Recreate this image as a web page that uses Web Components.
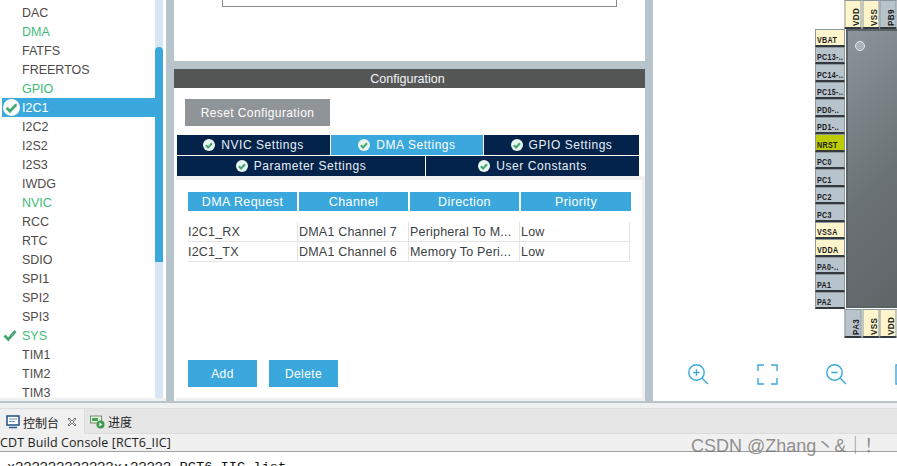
<!DOCTYPE html>
<html><head><meta charset="utf-8"><style>
html,body{margin:0;padding:0;width:897px;height:466px;overflow:hidden;background:#fff}
</style></head><body>
<mx-app></mx-app>
<script>
const F='"Liberation Sans",Arial,sans-serif';
function def(n,html){customElements.define(n,class extends HTMLElement{connectedCallback(){if(this.shadowRoot)return;const r=this.attachShadow({mode:'open'});r.innerHTML=html;}});}

def('mx-list',`<style>
:host{display:flex;width:166px;height:100%;flex:none;background:#fff;box-sizing:border-box;padding-left:2px;overflow:hidden;font:12.5px ${F};color:#4f4a48;border-bottom:3px solid #f0f0f0;border-left:0}
.items{width:153px;margin-top:3px;flex:none}
.i{height:19px;line-height:19px;display:flex;align-items:center;padding:1px 0 0 20px;box-sizing:border-box;position:relative;white-space:nowrap}
.g{color:#42bb77}
.s{background:#3aa8dc;color:#fff}
svg.ic{position:absolute;left:1px;top:1px}
svg.ck{position:absolute;left:1px;top:3px}
.bar{width:8px;flex:none;background:#d6e6f4;position:relative}
.th{position:absolute;left:0;right:0;top:47px;height:215px;background:#3aa8dc;border-radius:4px 4px 0 0}
</style><div class="items">
${[['DAC'],['DMA','g'],['FATFS'],['FREERTOS'],['GPIO','g'],['I2C1','s'],['I2C2'],['I2S2'],['I2S3'],['IWDG'],['NVIC','g'],['RCC'],['RTC'],['SDIO'],['SPI1'],['SPI2'],['SPI3'],['SYS','g k'],['TIM1'],['TIM2'],['TIM3']].map(([t,c=''])=>{
let ic='';
if(c==='s')ic=`<svg class="ic" width="17" height="17" viewBox="0 0 16 16"><circle cx="8" cy="8" r="8" fill="#fff"/><path d="M3.4 8.2l3.2 3.3 6-6.4" fill="none" stroke="#45a874" stroke-width="2.6"/></svg>`;
if(c==='g k')ic=`<svg class="ck" width="14" height="13" viewBox="0 0 14 13"><path d="M1.5 6.5l3.8 4 7.2-8.5" fill="none" stroke="#45a874" stroke-width="2.8"/></svg>`;
return `<div class="i ${c}">${ic}${t}</div>`}).join('')}
</div><div class="bar"><div class="th"></div></div>`);

def('mx-tab',`<style>
:host{display:flex;align-items:center;justify-content:center;gap:6px;box-sizing:border-box;background:#03234b;color:#e8f0f6;font:12px ${F};letter-spacing:.55px;white-space:nowrap}
:host([on]){background:#3aa8dc;color:#fff}
</style><svg width="12" height="12" viewBox="0 0 16 16"><circle cx="8" cy="8" r="8" fill="#e9f6ef"/><path d="M3.8 8.2l3 3 5.2-5.6" fill="none" stroke="#45a874" stroke-width="2.8"/></svg><slot></slot>`);

def('mx-btn',`<style>
:host{display:flex;align-items:center;justify-content:center;background:var(--b,#3aa8dc);color:#fff;font:12px ${F};letter-spacing:.4px;box-sizing:border-box;height:27px;white-space:nowrap}
</style><slot></slot>`);

def('mx-table',`<style>
:host{display:block;margin:12px 0 0 12px;width:443px;font:12.5px ${F};color:#3c3f44}
.h{display:grid;grid-template-columns:109px 109px 109px 110px;gap:2px;height:19px}
.h div{background:#3aa8dc;color:#fff;display:flex;align-items:center;justify-content:center;letter-spacing:.4px}
.r{display:grid;grid-template-columns:110px 111px 111px 110px;height:20px;border-bottom:1px solid #e4e4e4;box-sizing:border-box;align-items:center;letter-spacing:.2px}
.r div{height:100%;border-right:1px solid #e4e4e4;box-sizing:border-box;line-height:21px;white-space:nowrap;overflow:hidden}
.r div+div{padding-left:1px}
.body{margin-top:11px}
</style><div class="h"><div>DMA Request</div><div>Channel</div><div>Direction</div><div>Priority</div></div>
<div class="body"><div class="r"><div>I2C1_RX</div><div>DMA1 Channel 7</div><div>Peripheral To M...</div><div>Low</div></div>
<div class="r"><div>I2C1_TX</div><div>DMA1 Channel 6</div><div>Memory To Peri...</div><div>Low</div></div></div>`);

def('mx-config',`<style>
:host{display:flex;flex-direction:column;flex:none;width:471px;height:100%;background:#b8c4cc;font-family:${F}}
.top{height:61px;background:#fff;flex:none;display:flex}
.box{width:395px;height:7px;box-sizing:border-box;border:1px solid #8b8b8b;border-top:0;background:#fff;margin-left:48px}
.cfg{margin-top:8px;flex:1;background:#fff;display:flex;flex-direction:column;min-height:0}
.hd{height:19px;background:#555756;color:#f2f5f7;font-size:12.5px;display:flex;align-items:center;justify-content:center;flex:none;padding-right:4px}
.rs{margin:11px 0 0 11px;width:145px}
.t1{display:grid;grid-template-columns:153px 152px 155px;gap:1px;margin:9px 0 0 3px;width:462px;height:20px}
.t2{display:grid;grid-template-columns:248px 213px;gap:1px;margin:1px 0 0 3px;width:462px;height:20px}
.pane{flex:1;margin-left:2px;background:#fff;border:solid #f0f0f0;border-width:4px 3px 3px 0;display:flex;flex-direction:column;min-height:0}
.btns{display:flex;gap:12px;margin:auto 0 11px 12px}
.btns mx-btn{width:69px}
</style>
<div class="top"><div class="box"></div></div>
<div class="cfg"><div class="hd">Configuration</div>
<mx-btn class="rs" style="--b:#8f9499">Reset Configuration</mx-btn>
<div class="t1"><mx-tab>NVIC Settings</mx-tab><mx-tab on>DMA Settings</mx-tab><mx-tab>GPIO Settings</mx-tab></div>
<div class="t2"><mx-tab>Parameter Settings</mx-tab><mx-tab>User Constants</mx-tab></div>
<div class="pane"><mx-table></mx-table><div class="btns"><mx-btn>Add</mx-btn><mx-btn>Delete</mx-btn></div></div>
</div>`);

def('mx-pin',`<style>
:host{display:flex;align-items:flex-end;box-sizing:border-box;background:#b8c4cc;border:1px solid #8d979e;border-bottom:2px solid #33393d;color:#1a1a1a;font:bold 9.5px/10px ${F};letter-spacing:.4px;white-space:nowrap;padding-left:1px}
:host([y]){background:#fff5cc}
:host([n]){background:#bdcc00}
span{display:inline-block;transform:scale(.75,1);transform-origin:0 50%}
:host([v]){writing-mode:vertical-rl;justify-content:flex-start;align-items:center;padding:0 5px 0 0;transform:rotate(180deg);border:1px solid #8d979e;border-top:2px solid #33393d}
:host([v]) span{transform:scale(1,.85);transform-origin:50% 0;margin-top:1px}
</style><span><slot></slot></span>`);

def('mx-chip',`<style>
:host{display:block;flex:1;min-width:0;position:relative;overflow:hidden;background:#fff}
.tp,.bt{position:absolute;left:192px;display:flex;gap:1px}
.tp{top:0}.bt{top:309px}
.tp mx-pin,.bt mx-pin{width:16.5px;height:29px}
.l{position:absolute;left:162px;top:29px;width:30px;display:flex;flex-direction:column}
.l mx-pin{height:17.5px;width:30px}
.body{position:absolute;left:193px;top:29px;width:60px;height:279px;box-sizing:border-box;border:2px solid #5b6266;background:linear-gradient(135deg,#8b959b,#6b7276 55%,#5f6467)}
.dot{position:absolute;left:7px;top:10px;width:8px;height:8px;border-radius:50%;background:#aab3b8;border:1px solid #e6e9ea}
.z{position:absolute;top:364px;width:21px;height:21px}
</style>
<div class="tp"><mx-pin v y>VDD</mx-pin><mx-pin v y>VSS</mx-pin><mx-pin v>PB9</mx-pin></div>
<div class="l">${[['VBAT','y'],['PC13-..'],['PC14-..'],['PC15-..'],['PD0-..'],['PD1-..'],['NRST','n'],['PC0'],['PC1'],['PC2'],['PC3'],['VSSA','y'],['VDDA','y'],['PA0-..'],['PA1'],['PA2']].map(([t,c=''])=>`<mx-pin ${c}>${t}</mx-pin>`).join('')}</div>
<div class="body"><div class="dot"></div></div>
<div class="bt"><mx-pin v>PA3</mx-pin><mx-pin v y>VSS</mx-pin><mx-pin v y>VDD</mx-pin></div>
<svg class="z" style="left:35px" viewBox="0 0 21 21" fill="none" stroke="#3aa8dc" stroke-width="1.4"><circle cx="8.5" cy="8.5" r="7.7"/><path d="M14 14l6 6M5.3 8.5h6.4M8.5 5.3v6.4"/></svg>
<svg class="z" style="left:104px" viewBox="0 0 21 21" fill="none" stroke="#3aa8dc" stroke-width="1.4"><path d="M1 7V1h6M14 1h6v6M20 14v6h-6M7 20H1v-6"/></svg>
<svg class="z" style="left:173px" viewBox="0 0 21 21" fill="none" stroke="#3aa8dc" stroke-width="1.4"><circle cx="8.5" cy="8.5" r="7.7"/><path d="M14 14l6 6M5.3 8.5h6.4"/></svg>
<svg class="z" style="left:242px" viewBox="0 0 21 21" fill="none" stroke="#3aa8dc" stroke-width="1.4"><path d="M1 1h19v19H1z"/></svg>`);

def('mx-console',`<style>
:host{display:block;height:63px;flex:none;background:#f0f0f0;overflow:hidden;position:relative;font-family:"Noto Sans CJK SC","Noto Sans",sans-serif}
.tabs{height:26px;margin-top:5px;background:#e6e6e6;border-top:1px solid #dcdcdc;border-bottom:1px solid #dcdcdc;box-sizing:border-box;display:flex;font-size:12px;color:#222}
.t{display:flex;align-items:center;gap:3px;padding:1px 0 0 6px;box-sizing:border-box;height:100%}
.t.on{width:85px;background:#f0f0f0;border-right:1px solid #dcdcdc;height:25px}
.head{height:18px;padding-top:1px;background:#f0f0f0;border-bottom:1px solid #a0a0a0;box-sizing:border-box;font:12.5px/16px "Open Sans",sans-serif;letter-spacing:.1px;color:#222;white-space:nowrap}
.bd{background:#fff;height:20px;padding:8px 0 0 7px;box-sizing:border-box;overflow:hidden}
.txt{font:13.7px/16px "Liberation Mono",monospace;color:#111;white-space:pre}
.wm{position:absolute;left:691px;top:28px;font:18px "Liberation Sans","Noto Sans CJK SC",sans-serif;color:rgba(110,110,110,.75);white-space:nowrap}
</style>
<div class="tabs"><div class="t on"><svg width="14" height="14" viewBox="0 0 14 14"><rect x="1" y="1" width="12" height="9" fill="#fff" stroke="#2a5b8c" stroke-width="1.6"/><path d="M3 4h8M3 6.5h6" stroke="#6c93b8"/><path d="M3 12.5h8" stroke="#2a5b8c" stroke-width="1.5"/></svg>控制台<svg style="margin-left:5px" width="10" height="10" viewBox="0 0 10 10" fill="none" stroke="#777"><path d="M1 2l1-1 3 3 3-3 1 1-3 3 3 3-1 1-3-3-3 3-1-1 3-3z"/></svg></div>
<div class="t" style="padding-left:5px"><svg width="15" height="15" viewBox="0 0 15 15"><rect x="0.5" y="2" width="11" height="7" fill="#e8f3e0" stroke="#6f8f6f"/><rect x="2" y="4" width="6" height="3" fill="#4aa15a"/><circle cx="10.5" cy="10.5" r="4" fill="#3c9a4c"/><path d="M9.3 8.5l3 2-3 2z" fill="#fff"/></svg>进度</div></div>
<div class="head">CDT Build Console [RCT6_IIC]</div>
<div class="bd"><div class="txt">x????????????x:????? RCT6_IIC.list</div></div>
<div class="wm">CSDN @Zhang丶&amp;｜！</div>`);

def('mx-app',`<style>
:host{display:flex;flex-direction:column;width:897px;height:466px;background:#b8c4cc;overflow:hidden}
.main{height:403px;padding-bottom:2px;box-sizing:border-box;display:flex;flex:none;background:#b8c4cc}
.g1{width:8px;flex:none}.g2{width:8px;flex:none}
</style>
<div class="main"><mx-list></mx-list><div class="g1"></div><mx-config></mx-config><div class="g2"></div><mx-chip></mx-chip></div>
<mx-console></mx-console>`);
</script></body></html>
